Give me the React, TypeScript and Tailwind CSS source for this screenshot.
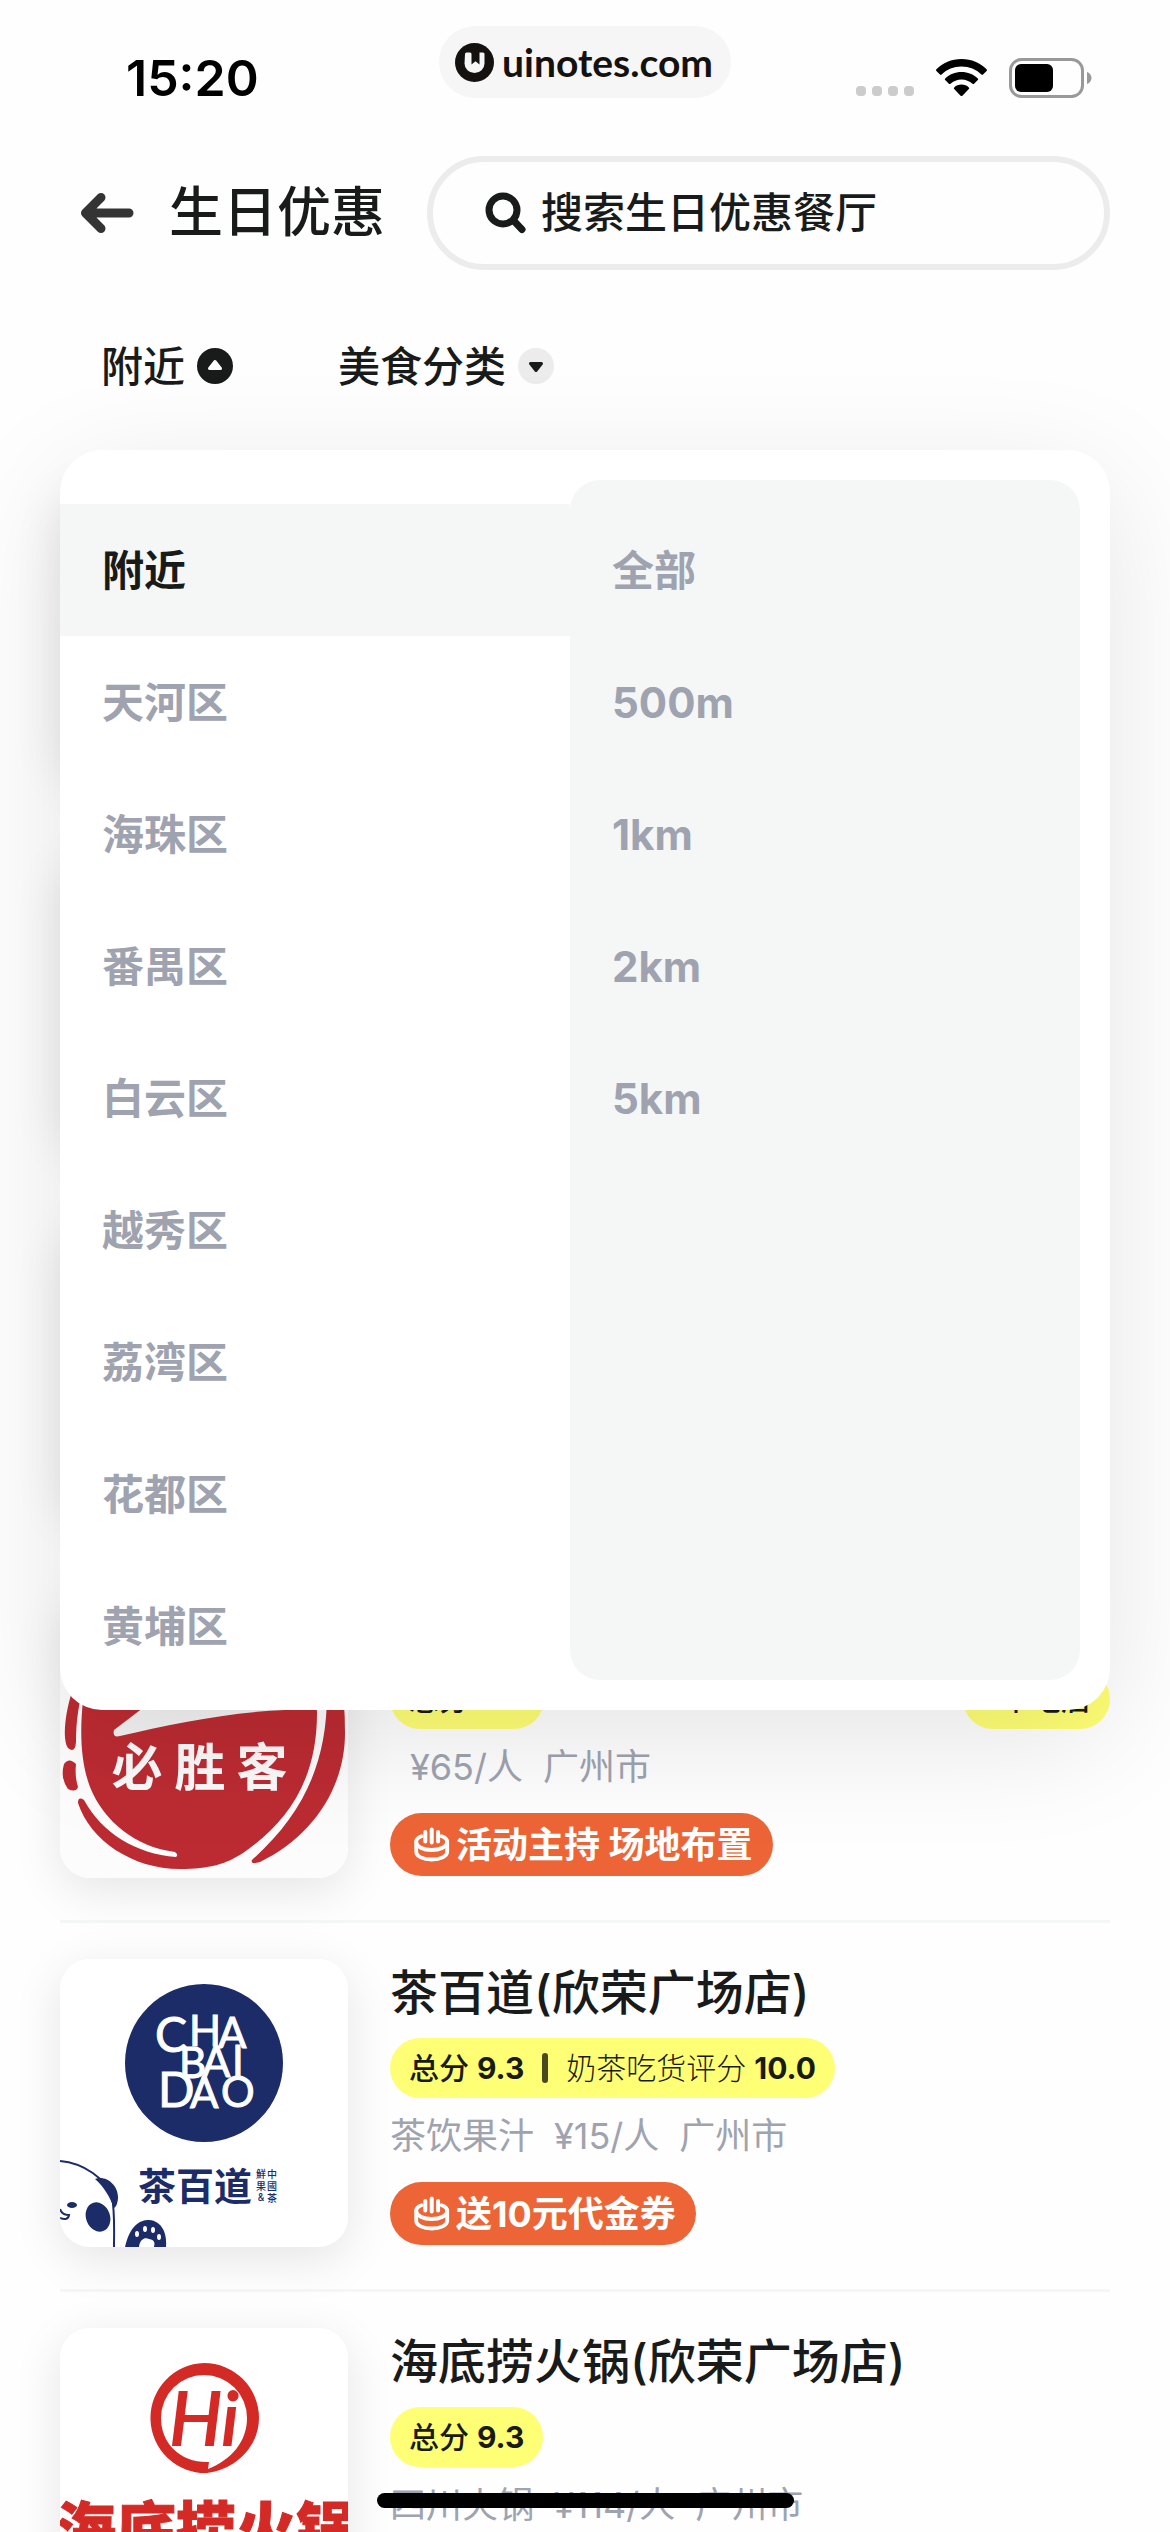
import { useState } from 'react'

const districts = ['附近', '天河区', '海珠区', '番禺区', '白云区', '越秀区', '荔湾区', '花都区', '黄埔区']
const distances = ['全部', '500m', '1km', '2km', '5km']

type LogoName = 'none' | 'pizza' | 'tea' | 'hotpot'

interface Shop {
  id: string
  logo: LogoName
  name?: string
  score?: string
  extraLabel?: string
  extraScore?: string
  branches?: string
  category?: string
  price?: string
  city?: string
  offer?: string
}

const shops: Shop[] = [
  { id: 'a', logo: 'none' },
  { id: 'b', logo: 'none' },
  { id: 'c', logo: 'none' },
  {
    id: 'pizza',
    logo: 'pizza',
    name: '必胜客',
    score: '9.2',
    branches: '5个吃店',
    category: '',
    price: '¥65/人',
    city: '广州市',
    offer: '活动主持 场地布置',
  },
  {
    id: 'tea',
    logo: 'tea',
    name: '茶百道(欣荣广场店)',
    score: '9.3',
    extraLabel: '奶茶吃货评分',
    extraScore: '10.0',
    category: '茶饮果汁',
    price: '¥15/人',
    city: '广州市',
    offer: '送10元代金券',
  },
  {
    id: 'hotpot',
    logo: 'hotpot',
    name: '海底捞火锅(欣荣广场店)',
    score: '9.3',
    category: '四川火锅',
    price: '¥114/人',
    city: '广州市',
    offer: '送生日果盘',
  },
]

function StatusBar() {
  return (
    <header className="relative flex h-[126px] shrink-0 items-center justify-between pt-[30px] pr-[78px] pl-[126px]">
      <span className="text-[50px] leading-none font-semibold text-black">15:20</span>
      <div className="flex items-center gap-[22px]">
        <svg className="h-[38px] w-[58px]" viewBox="0 0 58 38" fill="#cccccc">
          {[0, 16, 32, 48].map((x) => (
            <rect key={x} x={x} y="27" width="10" height="10" rx="4" />
          ))}
        </svg>
        <svg className="h-[38px] w-[51px]" viewBox="0 0 51 38">
          <path d="M25.500 0C35.500 0 44.300 4 50.600 10.200c.500.500.500 1.200 0 1.700l-3.600 3.600c-.500.500-1.100.500-1.600 0C40.200 10.600 33.200 7.600 25.500 7.600S10.800 10.600 5.600 15.500c-.500.500-1.100.500-1.600 0L.4 11.900c-.500-.500-.500-1.200 0-1.700C6.700 4 15.500 0 25.500 0z" />
          <path d="M25.500 13c6.300 0 12 2.400 16.300 6.400.500.500.500 1.200 0 1.700l-3.700 3.600c-.4.500-1.100.500-1.600.1-2.900-2.600-6.800-4.200-11-4.200s-8.100 1.600-11 4.200c-.500.4-1.200.4-1.600-.1l-3.700-3.600c-.500-.500-.500-1.200 0-1.700C13.500 15.400 19.200 13 25.500 13z" />
          <path d="M25.500 25.600c2.800 0 5.400 1 7.300 2.800.5.500.5 1.200 0 1.700l-6.400 6.600c-.5.500-1.300.5-1.800 0l-6.400-6.600c-.5-.5-.5-1.200 0-1.700 1.900-1.800 4.500-2.800 7.300-2.800z" />
        </svg>
        <svg className="h-[40px] w-[83px]" viewBox="0 0 83 40">
          <rect x="1.500" y="1.500" width="72" height="37" rx="11" fill="none" stroke="#999999" strokeWidth="3" />
          <rect x="6" y="6" width="38" height="28" rx="6" />
          <path d="M78 14c3 1 4.500 3.500 4.500 6S81 25 78 26z" fill="#999999" />
        </svg>
      </div>
      <div className="absolute inset-x-0 top-[26px] flex justify-center">
        <div className="flex h-[72px] items-center gap-2 rounded-full bg-[#f6f6f6] pr-[18px] pl-[16px] text-[#15110f]">
          <svg className="size-[39px]" viewBox="0 0 39 39">
            <circle cx="19.500" cy="19.500" r="19.500" fill="#15110f" />
            <path d="M10 11q0-1.500 1.500-1.500h3.500q1.500 0 1.500 1.500v10.500l4-3.200 4 3.200V9.500h3.500q1.500 0 1.500 1.500v9.500a10 9.500 0 0 1-20 0z" fill="#f6f6f6" />
          </svg>
          <span className="font-['Lato','Noto_Sans_CJK_SC',sans-serif] text-[39px] leading-none font-bold">uinotes.com</span>
        </div>
      </div>
    </header>
  )
}

function CakeIcon() {
  return (
    <svg className="size-[36px]" viewBox="0 0 36 36" fill="none" stroke="white" strokeWidth="3.800" strokeLinecap="round" strokeLinejoin="round">
      <path d="M7.500 9.300C4 10.500 2.200 12.500 2.200 15c0 4.500 7 8 15.500 8s15.500-3.500 15.500-8c0-2.500-2-4.500-5.500-5.700" />
      <path d="M2.200 15v9.500c0 5 7 8 15.500 8s15.500-3 15.500-8V15" />
      <path d="M11.300 5v9.500M17.700 2.500v13M24.100 5v9.500" strokeWidth="4" />
    </svg>
  )
}

function PizzaLogo() {
  return (
    <svg viewBox="0 0 288 288" className="size-full" fill="#bc2b32">
      <rect width="288" height="288" fill="#fdfcfd" />
      <path d="M23 110C20 140 20 170 30 197C44 232 76 257 115 262Q119 265 116 267C76 264 42 243 24 210Q18 206 18 213C30 250 72 279 120 279C150 279 166 274 183 263C228 232 257 190 257 123L255 80H30z" />
      <path d="M266 80C272 160 250 218 192 270Q190 275 200 272C250 248 285 200 285 143Q285 110 280 80z" />
      <path d="M14 96C5 120 2 150 8 158Q15 164 16 152C16 130 19 112 24 96z" />
      <path d="M4 174Q9 167 16 174C15 184 16 190 18 197Q16 203 8 199Q0 188 4 174z" />
      <path d="M96 108L54 140Q52 148 60 146C110 134 170 122 225 120L240 100z" fill="#f3f2f3" />
      <g fontSize="51" fontWeight="700" fill="#fbfafb" textAnchor="middle">
        <text x="77" y="196">必</text>
        <text x="140" y="196">胜</text>
        <text x="202" y="196">客</text>
      </g>
    </svg>
  )
}

function TeaLogo() {
  return (
    <svg viewBox="0 0 288 288" className="size-full" fill="#1b2c68">
      <rect width="288" height="288" fill="white" />
      <circle cx="144" cy="104" r="79" />
      <g fill="white" stroke="white" strokeWidth="1" fontSize="42" className="font-['Lato',sans-serif]">
        <text x="95" y="93" fontSize="48">C</text>
        <text x="129" y="87">H</text>
        <text x="158" y="89">A</text>
        <text x="119" y="119">B</text>
        <text x="142" y="118">A</text>
        <text x="172" y="117">I</text>
        <text x="98" y="148" fontSize="48">D</text>
        <text x="130" y="149">A</text>
        <text x="161" y="148">O</text>
      </g>
      <text x="135" y="241" textAnchor="middle" fontSize="38" fontWeight="700">茶百道</text>
      <g fontSize="10" fontWeight="500" textAnchor="middle">
        <text x="201" y="219">鮮</text>
        <text x="212" y="219">中</text>
        <text x="201" y="231">果</text>
        <text x="212" y="231">國</text>
        <text x="201" y="242">&amp;</text>
        <text x="212" y="243">茶</text>
      </g>
      <path d="M0 202C24 204 46 220 52 238C55 254 54 272 54 288" fill="none" stroke="#1b2c68" strokeWidth="2" />
      <path d="M35 220C46 216 58 226 58 238C58 244 56 248 54 249C50 238 44 228 35 220z" />
      <ellipse cx="38" cy="258" rx="12" ry="15" transform="rotate(-20 38 258)" />
      <ellipse cx="12" cy="246" rx="5" ry="3" />
      <path d="M0 250Q2 256 9 256Q8 262 0 259" fill="none" stroke="#1b2c68" strokeWidth="2" />
      <path d="M65 288C70 266 80 261 89 261C102 262 107 274 106 288z" />
      <g fill="white">
        <ellipse cx="77" cy="275" rx="2" ry="3" />
        <ellipse cx="85" cy="270" rx="2" ry="3" />
        <ellipse cx="93" cy="271" rx="2" ry="3" />
        <ellipse cx="99" cy="278" rx="2" ry="3" />
        <path d="M79 288C80 280 85 278 89 280C95 281 95 284 94 288z" />
      </g>
    </svg>
  )
}

function HotpotLogo() {
  return (
    <svg viewBox="0 0 288 288" className="size-full" fill="#d42a26">
      <rect width="288" height="288" fill="white" />
      <path d="M144 35a55 55 0 1 0 3 110c28-3 52-26 52-55a55 55 0 0 0-55-55zm0 12a43 43 0 0 1 43 43c0 24-16 42-39 51l1-7c-28 1-48-18-48-44a43 43 0 0 1 43-43z" fillRule="evenodd" />
      <text x="144" y="117" textAnchor="middle" fontSize="74" fontStyle="italic" className="font-['Lato',sans-serif]" stroke="#d42a26" strokeWidth="2">
        Hi
      </text>
      <text x="146" y="224" textAnchor="middle" fontSize="60" fontWeight="900" stroke="#d42a26" strokeWidth="1">海底捞火锅</text>
    </svg>
  )
}

function Thumb({ logo }: { logo: LogoName }) {
  return (
    <div className="size-[288px] shrink-0 overflow-hidden rounded-[30px] bg-white shadow-[0_12px_48px_rgba(0,0,0,0.1)]">
      {logo === 'pizza' && <PizzaLogo />}
      {logo === 'tea' && <TeaLogo />}
      {logo === 'hotpot' && <HotpotLogo />}
    </div>
  )
}

function ShopRow({ shop }: { shop: Shop }) {
  return (
    <li className="flex gap-[42px] border-b-[3px] border-[#f5f7f7] pt-[36px] pb-[42px]">
      <Thumb logo={shop.logo} />
      {shop.name && (
        <div className="flex h-[286px] min-w-0 flex-1 flex-col items-start">
          <h2 className="text-[48px] leading-[68px] font-medium whitespace-nowrap text-[#191b1b]">{shop.name}</h2>
          <div className="mt-[11px] flex w-full items-center justify-between">
            <p className="flex h-[60px] items-center gap-2 rounded-full bg-[#ffff75] px-[19px] text-[30px] text-[#191b12]">
              <span className="font-medium">总分</span>
              <b>{shop.score}</b>
              {shop.extraLabel && (
                <>
                  <span className="mx-[10px] h-[30px] w-[6px] rounded-full bg-[#4a4a1f]" />
                  <span className="font-light">{shop.extraLabel}</span>
                  <b>{shop.extraScore}</b>
                </>
              )}
            </p>
            {shop.branches && (
              <p className="flex h-[60px] items-center rounded-full bg-[#ffff75] px-[19px] text-[30px] font-medium text-[#191b12]">
                {shop.branches}
              </p>
            )}
          </div>
          <p className="mt-[12px] flex gap-[20px] text-[36px] leading-[52px] text-[#9fa3b0]">
            <span>{shop.category}</span>
            <span>{shop.price}</span>
            <span>{shop.city}</span>
          </p>
          <p className="mt-auto flex h-[63px] items-center gap-[6px] rounded-full bg-[#ed6537] pr-[20px] pl-[24px] text-[36px] font-bold text-white">
            <CakeIcon />
            <span>{shop.offer}</span>
          </p>
        </div>
      )}
    </li>
  )
}

export default function App() {
  const [district, setDistrict] = useState('附近')
  const [open, setOpen] = useState(true)

  return (
    <div className="relative flex h-screen flex-col overflow-hidden bg-[#fefefe] font-['Inter','Noto_Sans_CJK_SC',sans-serif] text-[#191b1b]">
      <StatusBar />

      <nav className="mt-[30px] flex h-[114px] shrink-0 items-center pr-[60px] pl-[80px]">
        <button type="button" aria-label="返回">
          <svg className="h-[42px] w-[54px]" viewBox="0 0 54 42" fill="none" stroke="#343434" strokeWidth="9" strokeLinecap="round" strokeLinejoin="round">
            <path d="M49 21H5.500M21 5.500 5.500 21 21 36.500" />
          </svg>
        </button>
        <h1 className="ml-[35px] text-[54px] leading-none font-medium whitespace-nowrap">生日优惠</h1>
        <label className="ml-[42px] flex h-full min-w-0 flex-1 items-center gap-[14px] rounded-full border-[6px] border-[#ececec] pl-[52px]">
          <svg className="size-[42px] shrink-0" viewBox="0 0 42 42" fill="none" stroke="#191b1b" strokeWidth="7" strokeLinecap="round">
            <circle cx="18" cy="18" r="14" />
            <path d="M28.500 28.500 37 37.500" />
          </svg>
          <input
            type="search"
            aria-label="搜索"
            placeholder="搜索生日优惠餐厅"
            className="min-w-0 flex-1 bg-transparent text-[42px] leading-[60px] font-medium outline-none placeholder:text-[#191b1b] placeholder:opacity-100"
          />
        </label>
      </nav>

      <div className="flex h-[177px] shrink-0 items-center gap-[105px] px-[101px] pt-[15px]">
        <button type="button" aria-expanded={open} onClick={() => setOpen(!open)} className="flex items-center gap-[12px] text-[42px] font-medium">
          附近
          <svg className="size-[36px]" viewBox="0 0 36 36">
            <circle cx="18" cy="18" r="18" fill="#191b1b" />
            <path d="M18 13.500 12.500 20.500H23.500z" fill="white" stroke="white" strokeWidth="3" strokeLinejoin="round" />
          </svg>
        </button>
        <button type="button" className="flex items-center gap-[12px] text-[42px] font-medium">
          美食分类
          <svg className="size-[36px]" viewBox="0 0 36 36">
            <circle cx="18" cy="18" r="18" fill="#ececec" />
            <path d="M18 22.500 12.500 15.500H23.500z" fill="#191b1b" stroke="#191b1b" strokeWidth="3" strokeLinejoin="round" />
          </svg>
        </button>
      </div>

      <main className="relative min-h-0 flex-1 px-[60px]">
        <ul>
          {shops.map((shop) => (
            <ShopRow key={shop.id} shop={shop} />
          ))}
        </ul>

        {open && (
          <div className="absolute inset-x-[60px] top-[3px] flex rounded-[42px] bg-white pr-[30px] shadow-[0_30px_120px_rgba(0,0,0,0.1)]">
            <ul className="flex-1 pt-[54px] pb-[18px]">
              {districts.map((name) => (
                <li key={name}>
                  <button
                    type="button"
                    onClick={() => setDistrict(name)}
                    className={`block h-[132px] w-full pl-[42px] text-left text-[42px] font-bold ${
                      name === district ? 'bg-[#f5f7f7] text-[#191b1b]' : 'text-[#9fa3b0]'
                    }`}
                  >
                    {name}
                  </button>
                </li>
              ))}
            </ul>
            <ul className="my-[30px] flex-1 rounded-[30px] bg-[#f5f7f7] pt-[24px]">
              {distances.map((name) => (
                <li key={name}>
                  <button type="button" className="block h-[132px] w-full pl-[42px] text-left text-[42px] font-bold text-[#9fa3b0]">
                    {name}
                  </button>
                </li>
              ))}
            </ul>
          </div>
        )}
      </main>

      <div className="absolute inset-x-0 bottom-[24px] flex justify-center">
        <div className="h-[15px] w-[417px] rounded-full bg-black" />
      </div>
    </div>
  )
}
